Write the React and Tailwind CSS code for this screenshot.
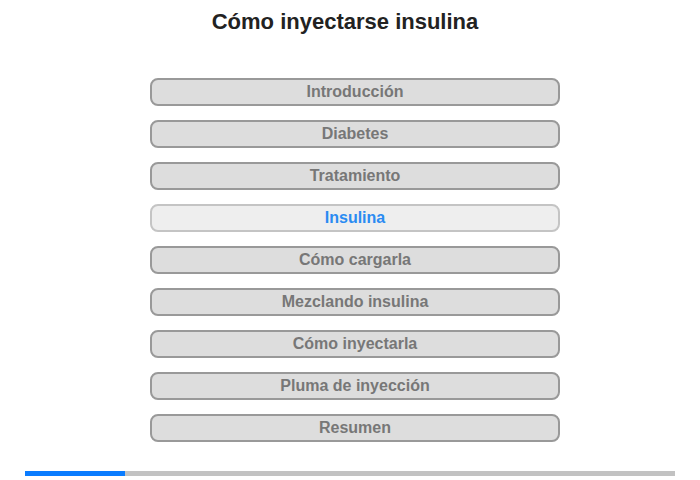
const sections = [
    'Introducción',
    'Diabetes',
    'Tratamiento',
    'Insulina',
    'Cómo cargarla',
    'Mezclando insulina',
    'Cómo inyectarla',
    'Pluma de inyección',
    'Resumen',
];

const current = 3;

const App = () => {
    return (
        <div className="w-[700px] h-[480px] bg-white flex flex-col font-['Liberation_Sans',Arial,sans-serif]">
            {/* Title */}
            <h1 className="mt-[8px] w-[690px] text-center text-[22px] leading-[28px] font-bold text-[#222]">
                Cómo inyectarse insulina
            </h1>

            {/* Menu */}
            <div className="mt-[42px] ml-[150px] flex flex-col gap-[14px] w-[410px]">
                {sections.map((label, i) => (
                    <div
                        key={label}
                        className={
                            i === current
                                ? 'h-[28px] rounded-[8px] border-2 border-[#c4c4c4] bg-[#eeeeee] flex items-center justify-center text-[16px] font-bold text-[#2a8bf2]'
                                : 'h-[28px] rounded-[8px] border-2 border-[#999999] bg-[#dddddd] flex items-center justify-center text-[16px] font-bold text-[#777777]'
                        }
                    >
                        {label}
                    </div>
                ))}
            </div>

            {/* Progress */}
            <div className="mt-[29px] ml-[25px] w-[650px] h-[5px] bg-[#c2c2c2] flex">
                <div className="w-[100px] h-full bg-[#0a7cff]"></div>
            </div>
        </div>
    );
};

export default App;
